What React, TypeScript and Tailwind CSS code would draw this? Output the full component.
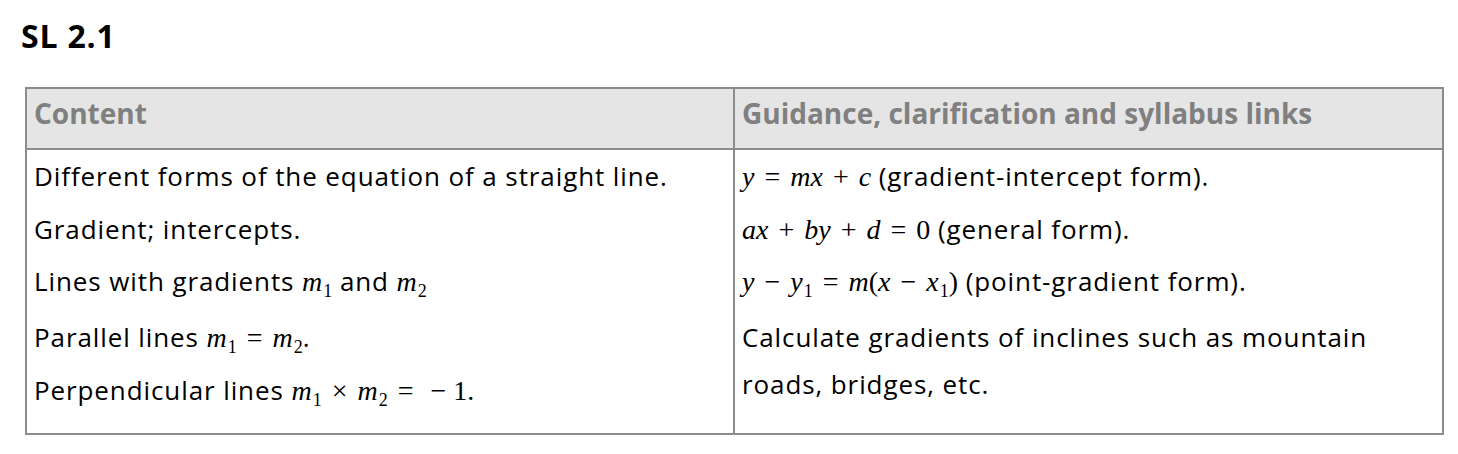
const serif = "font-['Liberation_Serif',serif] tracking-normal";

function Sub({ children }: { children: React.ReactNode }) {
  return <span className="text-[18px] not-italic relative top-[6px] ml-[1px]">{children}</span>;
}

function M({ children }: { children: React.ReactNode }) {
  return <span className={serif + " italic text-[28px]"}>{children}</span>;
}

function Op({ children }: { children: React.ReactNode }) {
  return <span className={serif + " text-[28px] mx-[10px]"}>{children}</span>;
}

function N({ children }: { children: React.ReactNode }) {
  return <span className={serif + " text-[28px]"}>{children}</span>;
}

export default function App() {
  return (
    <div className="w-[1458px] h-[454px] bg-white font-['Open_Sans',sans-serif] text-black">
      <div className="pl-[21px] pt-[14px]">
        <h1 className="text-[32px] font-bold leading-[44px] tracking-[0.8px]">SL 2.1</h1>
      </div>

      <div className="ml-[25px] mt-[29px] w-[1419px] border-2 border-[#8c8c8c]">
        <div className="grid grid-cols-[706px_1fr] bg-[#e5e5e5] border-b-2 border-[#8c8c8c] h-[61px]">
          <div className="px-[7px] pt-[6px] text-[28px] leading-[36px] font-bold text-[#808080]">
            Content
          </div>
          <div className="px-[7px] pt-[6px] border-l-2 border-[#8c8c8c] text-[28px] leading-[36px] font-bold text-[#808080]">
            Guidance, clarification and syllabus links
          </div>
        </div>

        <div className="grid grid-cols-[706px_1fr] text-[26px] tracking-[0.9px] h-[283px]">
          <div className="px-[7px] pt-[3px] flex flex-col">
            <p className="leading-[47px] h-[53px] whitespace-nowrap">Different forms of the equation of a straight line.</p>
            <p className="leading-[47px] h-[52px] whitespace-nowrap">Gradient; intercepts.</p>
            <p className="leading-[47px] h-[56px] whitespace-nowrap">
              Lines with gradients <M>m<Sub>1</Sub></M> and <M>m<Sub>2</Sub></M>
            </p>
            <p className="leading-[47px] h-[53px] whitespace-nowrap">
              Parallel lines <M>m<Sub>1</Sub></M><Op>=</Op><M>m<Sub>2</Sub></M>.
            </p>
            <p className="leading-[47px] h-[47px] whitespace-nowrap">
              Perpendicular lines <M>m<Sub>1</Sub></M><Op>×</Op><M>m<Sub>2</Sub></M><Op>=</Op>
              <N>&nbsp;−&nbsp;1.</N>
            </p>
          </div>
          <div className="px-[7px] pt-[3px] border-l-2 border-[#8c8c8c] flex flex-col">
            <p className="leading-[47px] h-[53px] whitespace-nowrap">
              <M>y</M><Op>=</Op><M>mx</M><Op>+</Op><M>c</M> (gradient-intercept form).
            </p>
            <p className="leading-[47px] h-[52px] whitespace-nowrap">
              <M>ax</M><Op>+</Op><M>by</M><Op>+</Op><M>d</M><Op>=</Op><N>0</N> (general form).
            </p>
            <p className="leading-[47px] h-[56px] whitespace-nowrap">
              <M>y</M><Op>−</Op><M>y<Sub>1</Sub></M><Op>=</Op><M>m</M><N>(</N><M>x</M><Op>−</Op><M>x<Sub>1</Sub></M><N>)</N> (point-gradient form).
            </p>
            <p className="leading-[47px] whitespace-nowrap">
              Calculate gradients of inclines such as mountain
              <br />
              roads, bridges, etc.
            </p>
          </div>
        </div>
      </div>
    </div>
  );
}
